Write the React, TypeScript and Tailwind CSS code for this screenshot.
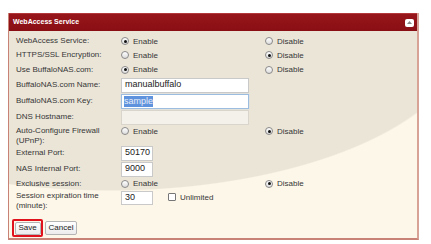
import React from "react";

function Radio({ checked }: { checked?: boolean }) {
  return (
    <span className="flex h-[8px] w-[8px] shrink-0 items-center justify-center rounded-full border border-[#8a8a8a] bg-gradient-to-b from-[#ffffff] to-[#dcdcdc]">
      {checked ? <span className="h-[3px] w-[3px] rounded-full bg-[#111]" /> : null}
    </span>
  );
}

function RadioPair({ enable }: { enable: boolean }) {
  return (
    <div className="flex items-center">
      <div className="flex w-[144px] items-center gap-[4px]">
        <Radio checked={enable} />
        <span className="mt-[1px]">Enable</span>
      </div>
      <div className="flex items-center gap-[4px]">
        <Radio checked={!enable} />
        <span className="mt-[1px]">Disable</span>
      </div>
    </div>
  );
}

function Row({
  label,
  h,
  children,
  start,
}: {
  label: React.ReactNode;
  h: string;
  children?: React.ReactNode;
  start?: boolean;
}) {
  return (
    <div className={`flex ${h} ${start ? "items-start" : "items-center"}`}>
      <div className="w-[105px] shrink-0 leading-[10px]">{label}</div>
      <div className="flex items-center">{children}</div>
    </div>
  );
}

export default function App() {
  return (
    <div className="h-[244px] w-[431px] overflow-hidden bg-white pl-[8px] pt-[13px] font-['Liberation_Sans',Arial,sans-serif] text-[8px] text-[#363636]">
      <div className="w-[411px] border-b-2 border-l border-r-2 border-b-[#c98276] border-l-[#c98276] border-r-[#d8a397]">
        <div className="flex h-[18px] items-center justify-between border-t border-t-[#b3383c] bg-gradient-to-b from-[#97161b] to-[#890e13] pl-[4px] pr-[3px]">
          <span className="text-[7px] font-bold text-white">WebAccess Service</span>
          <span className="flex h-[8px] w-[9px] items-center justify-center rounded-[2px] bg-white">
            <svg width="5" height="3" viewBox="0 0 5 3">
              <polygon points="2.5,0 5,3 0,3" fill="#8a8a8a" />
            </svg>
          </span>
        </div>
        <div className="h-[207px] bg-[radial-gradient(ellipse_360px_160px_at_100px_0px,#ebe5d8_99.3%,#fdf7e9_100%)] pl-[7px] pt-[3px]">
          <Row label="WebAccess Service:" h="h-[14px]">
            <RadioPair enable />
          </Row>
          <Row label="HTTPS/SSL Encryption:" h="h-[14px]">
            <RadioPair enable={false} />
          </Row>
          <Row label="Use BuffaloNAS.com:" h="h-[15px]">
            <RadioPair enable />
          </Row>
          <Row label="BuffaloNAS.com Name:" h="h-[16px]">
            <div className="flex h-[15px] w-[128px] items-center border border-[#c9c9c9] bg-white pl-[3px] text-[9px] text-[#222]">
              manualbuffalo
            </div>
          </Row>
          <Row label="BuffaloNAS.com Key:" h="h-[16px]">
            <div className="flex h-[15px] w-[128px] items-center border border-[#9dbde0] bg-white pl-[2px] text-[9px] shadow-[0_0_1px_#b8d0ea]">
              <span className="bg-[#5f92dc] leading-[11px] text-[#e8eefa]">sample</span>
            </div>
          </Row>
          <Row label="DNS Hostname:" h="h-[16px]">
            <div className="h-[15px] w-[128px] border border-[#d9d5cc] bg-[#f4f1ea]" />
          </Row>
          <Row
            label={
              <>
                <div className="h-[10px] pt-[0px]">Auto-Configure Firewall</div>
                <div className="h-[10px]">(UPnP):</div>
              </>
            }
            h="h-[20px] pt-[1px]"
            start
          >
            <div className="flex h-[10px] items-center">
              <RadioPair enable={false} />
            </div>
          </Row>
          <Row label="External Port:" h="h-[16px]">
            <div className="flex h-[15px] w-[32px] items-center border border-[#c9c9c9] bg-white pl-[3px] text-[9px] text-[#222]">
              50170
            </div>
          </Row>
          <Row label="NAS Internal Port:" h="h-[16px]">
            <div className="flex h-[15px] w-[32px] items-center border border-[#c9c9c9] bg-white pl-[3px] text-[9px] text-[#222]">
              9000
            </div>
          </Row>
          <Row label="Exclusive session:" h="h-[13px]">
            <RadioPair enable={false} />
          </Row>
          <Row
            label={
              <>
                <div className="h-[10px]">Session expiration time</div>
                <div className="h-[10px]">(minute):</div>
              </>
            }
            h="h-[22px] pt-[1px]"
            start
          >
            <div className="flex items-start">
              <div className="flex h-[14px] w-[32px] items-center border border-[#c9c9c9] bg-white pl-[3px] text-[9px] text-[#222]">
                30
              </div>
              <span className="ml-[15px] mt-[2px] h-[8px] w-[8px] rounded-[1px] border border-[#777] bg-white" />
              <span className="ml-[4px] mt-[2px] leading-[9px]">Unlimited</span>
            </div>
          </Row>
          <div className="mt-[7px] flex items-center gap-[2px] pl-[-3px]">
            <div className="-ml-[4px] flex h-[18px] w-[31px] items-center justify-center rounded-[2px] border-2 border-[#e0121c]">
              <div className="flex h-[13px] w-[26px] items-center justify-center rounded-[2px] border border-[#b4b4b4] bg-gradient-to-b from-[#ffffff] to-[#ececec] text-[8px] text-[#222]">
                Save
              </div>
            </div>
            <div className="flex h-[14px] w-[32px] items-center justify-center rounded-[2px] border border-[#b4b4b4] bg-gradient-to-b from-[#ffffff] to-[#ececec] text-[8px] text-[#222]">
              Cancel
            </div>
          </div>
        </div>
      </div>
    </div>
  );
}
